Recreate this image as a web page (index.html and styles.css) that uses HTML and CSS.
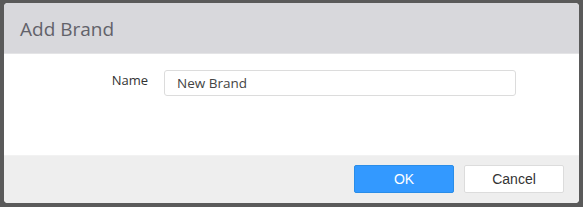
FILE: index.html
```html
<!DOCTYPE html>
<html lang="en">
<head>
    <meta charset="UTF-8">
    <title>Add Brand</title>
    <link rel="stylesheet" href="styles.css">
</head>
<body>
    <div class="dialog">
        <div class="dialog-header">Add Brand</div>
        <div class="dialog-body">
            <div class="form-row">
                <label class="form-label" for="brandName">Name</label>
                <input type="text" id="brandName" class="form-input" value="New Brand">
            </div>
        </div>
        <div class="dialog-footer">
            <button class="btn btn-ok">OK</button>
            <button class="btn btn-cancel">Cancel</button>
        </div>
    </div>
</body>
</html>
```

FILE: styles.css
```css
body {
    margin: 0;
    padding: 3px 4px;
    background-color: #5a5a5a;
    font-family: "Open Sans", Arial, sans-serif;
}
.dialog {
    width: 575px;
    height: 200px;
    border-radius: 4px;
    overflow: hidden;
    background-color: #fff;
    display: flex;
    flex-direction: column;
}
.dialog-header {
    height: 50px;
    background-color: #d8d8dc;
    border-bottom: 1px solid #e4e4e6;
    padding-left: 16px;
    font-size: 19px;
    line-height: 52px;
    color: #62626a;
}
.dialog-body {
    flex: 1;
    padding-top: 16px;
}
.form-row {
    display: flex;
    align-items: center;
}
.form-label {
    width: 144px;
    text-align: right;
    font-size: 13px;
    color: #333;
    margin-top: -6px;
}
.form-input {
    margin-left: 16px;
    width: 326px;
    height: 24px;
    padding: 0 12px;
    border: 1px solid #dcdcdc;
    border-radius: 3px;
    font-family: "Open Sans", Arial, sans-serif;
    font-size: 13.5px;
    color: #444;
    box-sizing: content-box;
}
.dialog-footer {
    height: 48px;
    background-color: #eeeeee;
    border-top: 1px solid #f2f2f2;
    display: flex;
    justify-content: flex-end;
    align-items: flex-start;
    padding: 9px 15px 0 0;
    box-sizing: border-box;
    gap: 10px;
}
.btn {
    width: 100px;
    height: 28px;
    border-radius: 2px;
    font-family: "Liberation Sans", Arial, sans-serif;
    font-size: 14px;
    cursor: pointer;
}
.btn-ok {
    background-color: #3399ff;
    border: 1px solid #2a8de8;
    color: #fff;
}
.btn-cancel {
    background-color: #fff;
    border: 1px solid #dcdcdc;
    color: #333;
}
```
